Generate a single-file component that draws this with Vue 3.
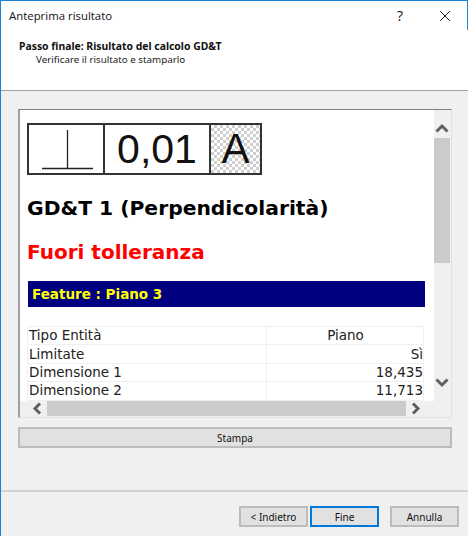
<template>
  <div class="dialog">
    <div class="titlebar">
      <span class="title">Anteprima risultato</span>
      <span class="help">?</span>
      <svg class="close" width="10" height="10" viewBox="0 0 10 10">
        <path d="M.3.3l9.4 9.4M9.7.3L.3 9.7" stroke="#222" stroke-width="1" fill="none" />
      </svg>
    </div>
    <div class="header">
      <div class="step">Passo finale: Risultato del calcolo GD&amp;T</div>
      <div class="hint">Verificare il risultato e stamparlo</div>
    </div>
    <div class="body">
      <div class="viewer">
        <div class="viewer-top">
          <div class="page">
            <div class="frame">
              <div class="cell symbol">
                <svg width="74" height="48" viewBox="0 0 74 48">
                  <path d="M13 43.5H64M38.5 5V43" stroke="#222" stroke-width="1.3" fill="none" />
                </svg>
              </div>
              <div class="cell tol">0,01</div>
              <div class="cell datum">A</div>
            </div>
            <h1>GD&amp;T 1 (Perpendicolarità)</h1>
            <h2>Fuori tolleranza</h2>
            <div class="feature">Feature : Piano 3</div>
            <table>
              <tbody>
                <tr v-for="row in rows" :key="row.name">
                  <td>{{ row.name }}</td>
                  <td :class="row.center ? 'center' : 'right'">{{ row.value }}</td>
                </tr>
              </tbody>
            </table>
          </div>
          <div class="vbar">
            <svg class="arrow" width="16" height="28" viewBox="0 0 16 28">
              <path d="M2.5 21.5L8 16L13.5 21.5" stroke="#606060" stroke-width="3" fill="none" />
            </svg>
            <div class="vtrack"><div class="vthumb"></div></div>
            <svg class="arrow" width="16" height="28" viewBox="0 0 16 28">
              <path d="M2.5 6.5L8 12L13.5 6.5" stroke="#606060" stroke-width="3" fill="none" />
            </svg>
          </div>
        </div>
        <div class="hbar">
          <svg class="arrow" width="27" height="15" viewBox="0 0 27 15">
            <path d="M20 2.5L15 7.5L20 12.5" stroke="#606060" stroke-width="3" fill="none" />
          </svg>
          <div class="hthumb"></div>
          <svg class="arrow" width="27" height="15" viewBox="0 0 27 15">
            <path d="M7 2.5L12 7.5L7 12.5" stroke="#606060" stroke-width="3" fill="none" />
          </svg>
        </div>
      </div>
      <button class="btn print">Stampa</button>
    </div>
    <div class="footer">
      <button class="btn nav">&lt; Indietro</button>
      <button class="btn nav primary">Fine</button>
      <button class="btn nav cancel">Annulla</button>
    </div>
  </div>
</template>

<script setup>
const rows = [
  { name: 'Tipo Entità', value: 'Piano', center: true },
  { name: 'Limitate', value: 'Sì' },
  { name: 'Dimensione 1', value: '18,435' },
  { name: 'Dimensione 2', value: '11,713' }
]
</script>

<style>
html,
body {
  margin: 0;
  background: #f0f0f0;
}
</style>

<style scoped>
.dialog {
  width: 468px;
  height: 536px;
  box-sizing: border-box;
  display: flex;
  flex-direction: column;
  background: #f0f0f0;
  border-top: 1px solid #1883d7;
  border-left: 1px solid #1883d7;
  font-family: "Liberation Sans", Arial, sans-serif;
  color: #111;
  overflow: hidden;
}

.titlebar {
  height: 29px;
  flex: none;
  display: flex;
  align-items: center;
  background: #fff;
  font-family: "Open Sans", sans-serif;
  font-size: 11.4px;
  border-right: 1px solid #1883d7;
}

.title {
  margin-left: 8px;
  flex: 1;
}

.help {
  font-size: 14px;
  margin-right: 37px;
}

.close {
  margin-right: 17px;
}

.header {
  height: 61px;
  flex: none;
  box-sizing: border-box;
  padding: 10px 0 0 18px;
  background: #fff;
  border-bottom: 1px solid #a0a0a0;
  font-family: "Noto Sans", sans-serif;
}

.step {
  font-size: 10.4px;
  font-weight: 700;
  line-height: 13px;
}

.hint {
  margin-left: 17px;
  font-size: 9.8px;
  line-height: 13px;
  color: #222;
}

.body {
  flex: 1;
  padding: 18px 16px 0 17px;
}

.viewer {
  height: 307px;
  display: flex;
  flex-direction: column;
  border-top: 1px solid #808080;
  border-left: 2px solid #a0a0a0;
  border-right: 1px solid #e3e3e3;
  border-bottom: 1px solid #e3e3e3;
}

.viewer-top {
  flex: 1;
  display: flex;
  min-height: 0;
}

.page {
  flex: 1;
  background: #fff;
  padding: 13px 0 0 7px;
  overflow: hidden;
}

.frame {
  display: flex;
  width: 235px;
  height: 52px;
  box-sizing: border-box;
  border: 2px solid #333;
}

.cell {
  display: flex;
  align-items: center;
  justify-content: center;
  box-sizing: border-box;
  height: 100%;
}

.symbol {
  width: 76px;
  border-right: 2px solid #333;
}

.tol {
  width: 106px;
  border-right: 2px solid #333;
  font-size: 41px;
}

.datum {
  flex: 1;
  font-size: 42px;
  background: repeating-conic-gradient(#cfcfcf 0 25%, #fff 0 50%) 0 0 / 6px 6px;
}

h1,
h2 {
  font-family: "DejaVu Sans", sans-serif;
  line-height: 24px;
  font-weight: 700;
}

h1 {
  margin: 21px 0 0;
  font-size: 20.3px;
  color: #000;
}

h2 {
  margin: 20px 0 0;
  font-size: 20px;
  color: #f00;
}

.feature {
  width: 397px;
  height: 26px;
  margin: 17px 0 0 1px;
  box-sizing: border-box;
  line-height: 26px;
  padding-left: 4px;
  background: #000080;
  color: #ff0;
  font-family: "DejaVu Sans", sans-serif;
  font-size: 13.5px;
  font-weight: 700;
}

table {
  width: 397px;
  margin-top: 19px;
  border-collapse: collapse;
  table-layout: fixed;
  font-family: "DejaVu Sans", sans-serif;
  font-size: 13.5px;
  color: #222;
}

td {
  height: 17.4px;
  padding: 0 0 0 1px;
  border: 1px solid #f0f0f0;
  line-height: 17px;
}

td:first-child {
  width: 237px;
}

.center {
  text-align: center;
}

.right {
  text-align: right;
}

.vbar {
  width: 16px;
  margin-right: 1px;
  flex: none;
  display: flex;
  flex-direction: column;
  background: #f0f0f0;
}

.arrow {
  flex: none;
}

.vtrack {
  flex: 1;
}

.vthumb {
  height: 125px;
  background: #cbcbcb;
}

.hbar {
  height: 15px;
  flex: none;
  display: flex;
  margin-bottom: 1px;
  background: #f0f0f0;
}

.hthumb {
  width: 359px;
  background: #cbcbcb;
}

.btn {
  display: block;
  box-sizing: border-box;
  padding: 0;
  background: #e1e1e1;
  border: 2px solid #bcbcbc;
  font-family: "Noto Sans", sans-serif;
  font-size: 10px;
  color: #111;
}

.print {
  width: 434px;
  height: 21px;
  margin-top: 9px;
}

.footer {
  height: 46px;
  flex: none;
  display: flex;
  align-items: flex-start;
  box-sizing: border-box;
  padding: 14px 0 0 238px;
  border-top: 2px solid #d2d2d2;
}

.nav {
  width: 69px;
  height: 21px;
}

.primary {
  margin-left: 2px;
  border-color: #0078d7;
}

.cancel {
  margin-left: 11px;
}
</style>
